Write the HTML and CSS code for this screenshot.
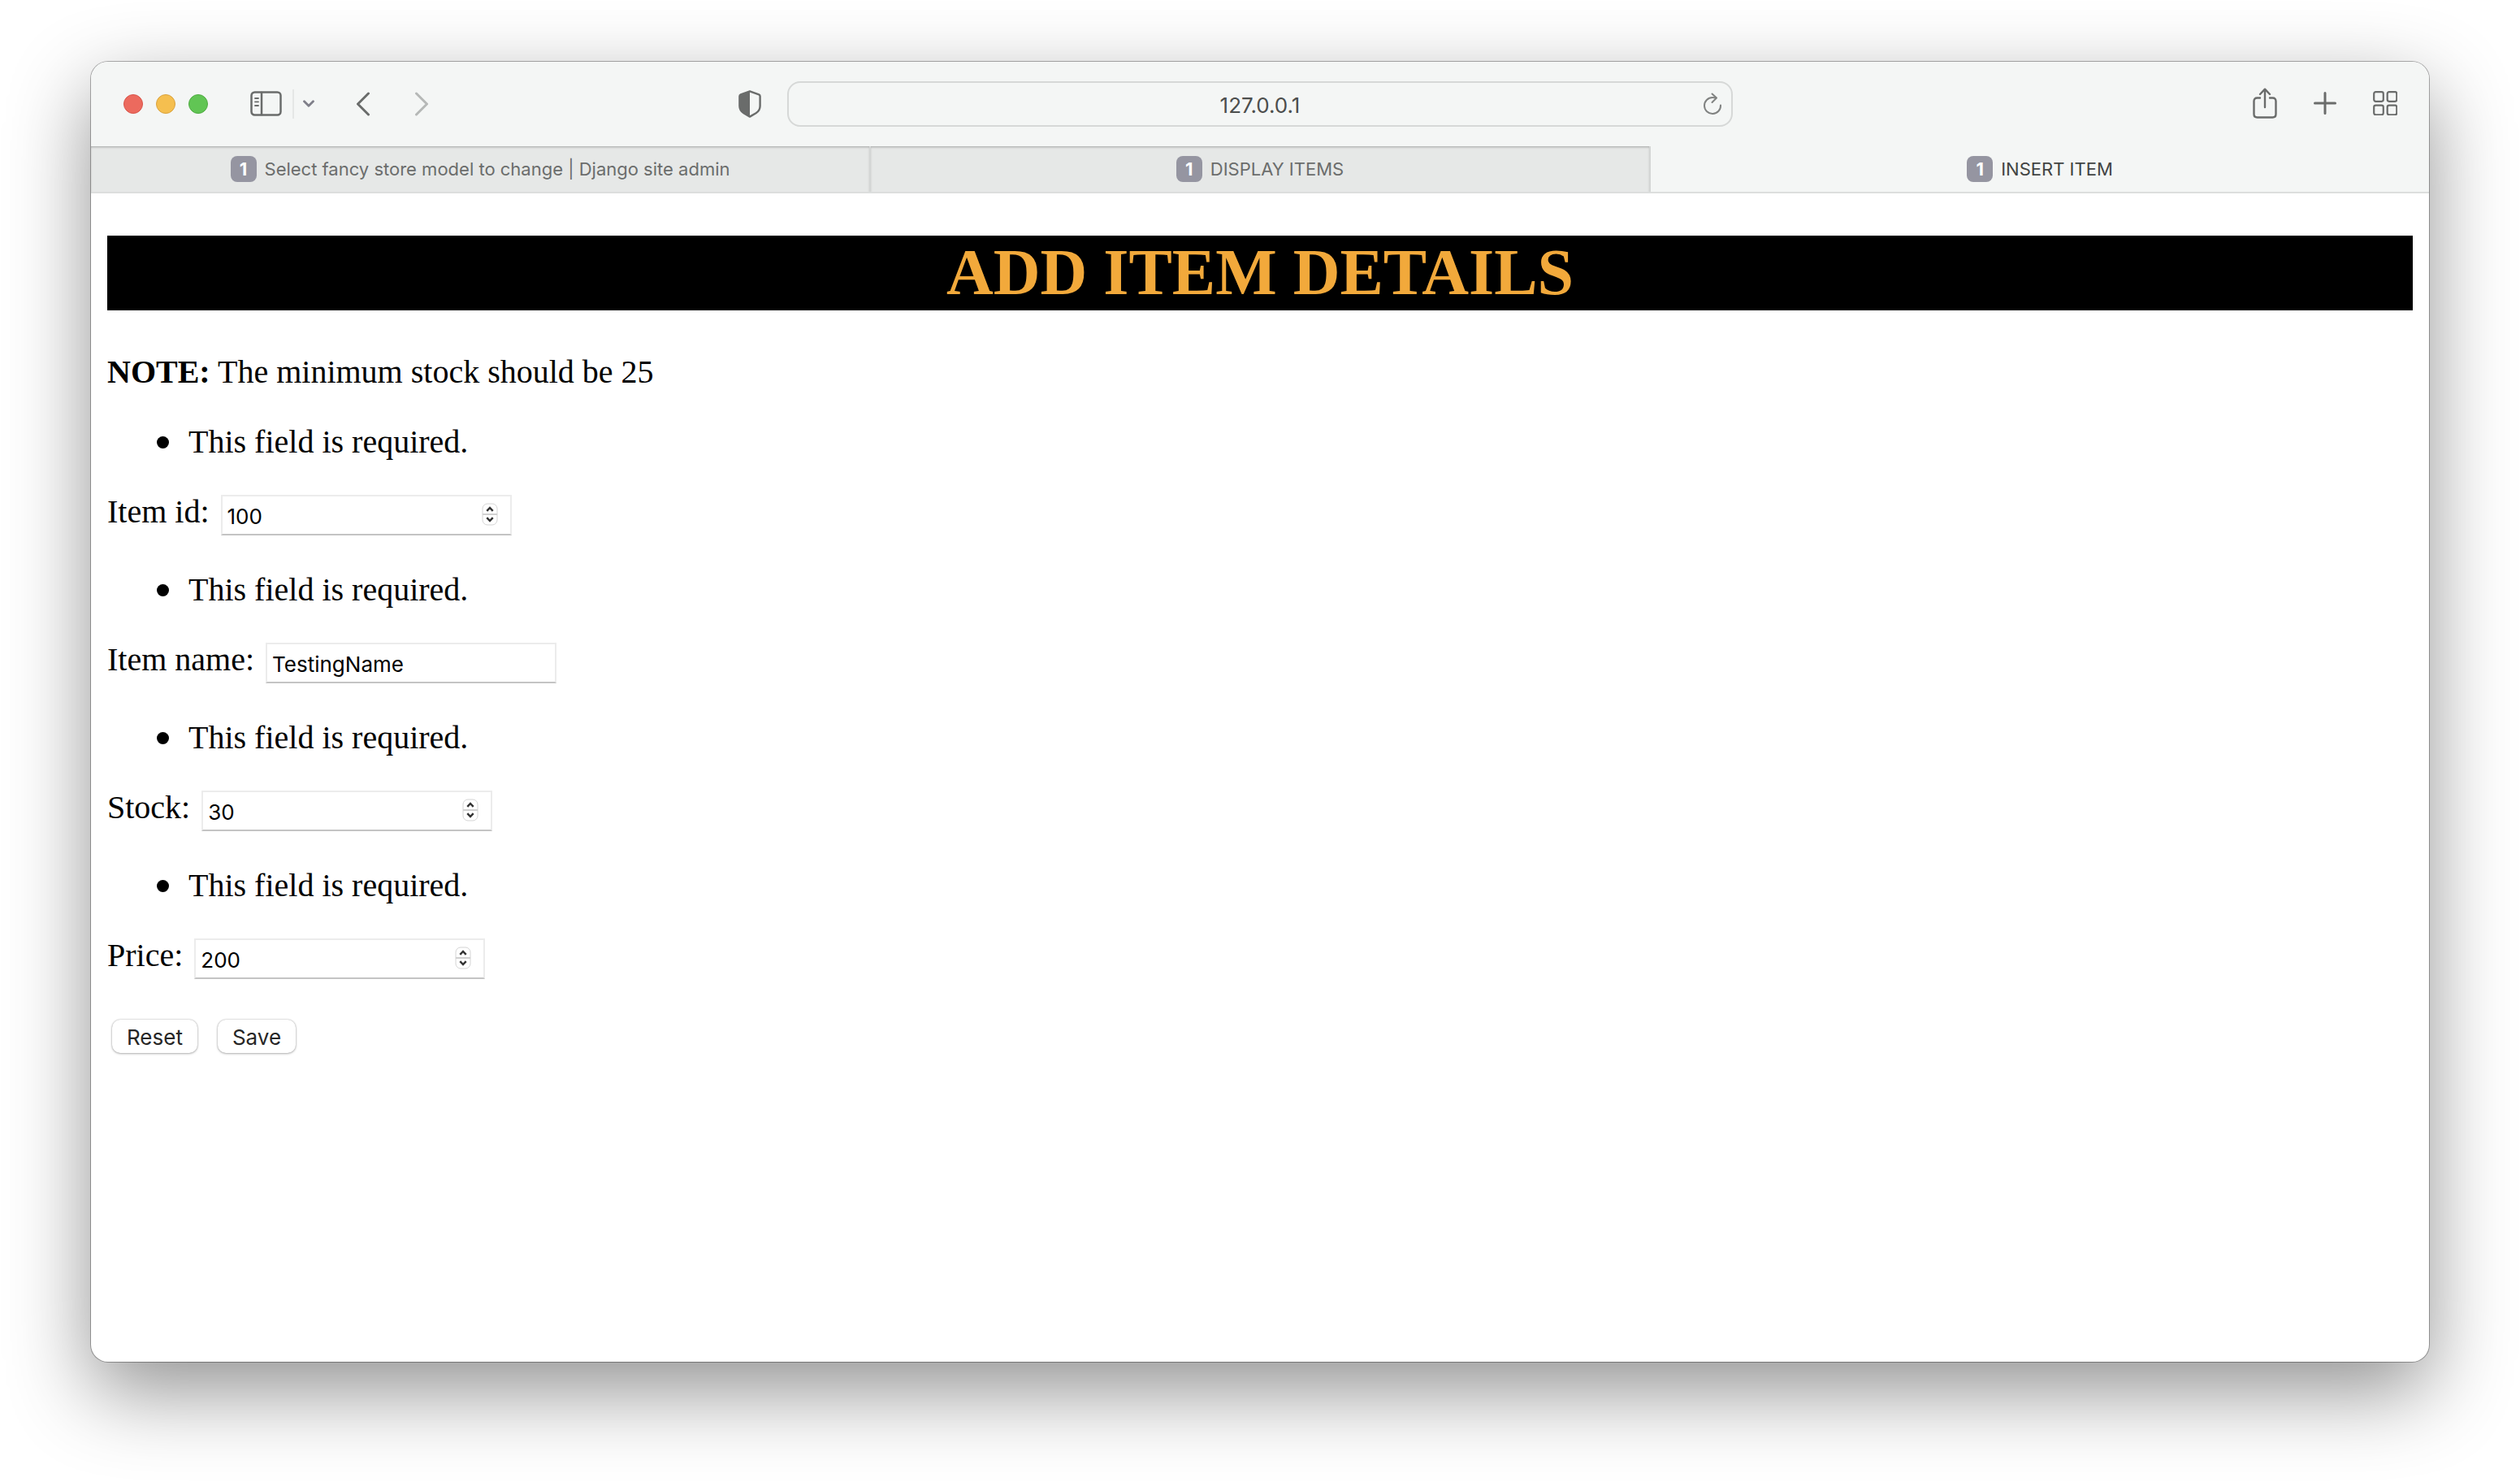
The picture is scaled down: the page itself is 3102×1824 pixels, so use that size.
FILE: index.html
```html
<!DOCTYPE html>
<html lang="en">
<head>
<meta charset="utf-8">
<title>INSERT ITEM</title>
<link rel="stylesheet" href="styles.css">
</head>
<body>
<div class="window">
  <header class="toolbar">
    <div class="tools tools-left">
      <div class="lights">
        <button class="light light-close" aria-label="Close"></button>
        <button class="light light-min" aria-label="Minimize"></button>
        <button class="light light-max" aria-label="Zoom"></button>
      </div>
      <button class="tool sidebar" aria-label="Sidebar">
        <svg width="40" height="32" viewBox="0 0 40 32" fill="none" stroke="currentColor" stroke-width="2.5" stroke-linecap="round"><rect x="1.5" y="1.5" width="36" height="28" rx="4"/><path d="M14 2v27"/><path d="M6 9h4M6 13.300h4M6 18h4" stroke-width="1.800"/></svg>
      </button>
      <span class="divider"></span>
      <button class="tool menu" aria-label="Sidebar menu">
        <svg width="14" height="10" viewBox="0 0 14 10" fill="none" stroke="#80808a" stroke-width="2.800" stroke-linecap="round" stroke-linejoin="round"><path d="M1.500 1.700 7 7.300l5.500-5.600"/></svg>
      </button>
      <button class="tool back" aria-label="Back">
        <svg width="18" height="30" viewBox="0 0 18 30" fill="none" stroke="currentColor" stroke-width="3" stroke-linecap="round" stroke-linejoin="round"><path d="M15.500 2 2.500 15l13 13"/></svg>
      </button>
      <button class="tool forward" aria-label="Forward" disabled>
        <svg width="18" height="30" viewBox="0 0 18 30" fill="none" stroke="currentColor" stroke-width="3" stroke-linecap="round" stroke-linejoin="round"><path d="M2.500 2l13 13-13 13"/></svg>
      </button>
      <button class="tool shield" aria-label="Privacy report">
        <svg width="28" height="34" viewBox="0 0 28 34"><path d="M14 1.300 25.200 5.300Q26.600 5.900 26.600 7.500V19.500Q26.600 25 21.500 28.300L14 32.600 6.500 28.300Q1.400 25 1.400 19.500V7.500Q1.400 5.900 2.800 5.300Z" fill="none" stroke="currentColor" stroke-width="2.400" stroke-linejoin="round"/><path d="M14 1.300V32.600L6.500 28.300Q1.400 25 1.400 19.500V7.500Q1.400 5.900 2.800 5.300Z" fill="currentColor"/></svg>
      </button>
    </div>
    <div class="address">
      <input class="url" type="text" value="127.0.0.1" aria-label="Address">
      <button class="tool reload" aria-label="Reload">
        <svg width="24" height="28" viewBox="0 0 24 28" fill="none" stroke="#808281" stroke-width="2" stroke-linecap="round" stroke-linejoin="round"><path d="M22 15.500A10 10 0 1 1 12 6q2.500 0 4.500.4"/><path d="M11.500 1.500 17 6.500l-5.500 5.500"/></svg>
      </button>
    </div>
    <div class="tools tools-right">
      <button class="tool" aria-label="Share">
        <svg width="30" height="38" viewBox="0 0 30 38" fill="none" stroke="currentColor" stroke-width="2.400" stroke-linecap="round" stroke-linejoin="round"><path d="M9 12.500H5.500Q1.500 12.500 1.500 16.500V32.500Q1.500 36.500 5.500 36.500H24.500Q28.500 36.500 28.500 32.500V16.500Q28.500 12.500 24.500 12.500H21"/><path d="M15 24V2M9 8l6-6.300L21 8"/></svg>
      </button>
      <button class="tool" aria-label="New tab">
        <svg width="28" height="28" viewBox="0 0 28 28" fill="none" stroke="currentColor" stroke-width="3" stroke-linecap="round"><path d="M14 1.500v25M1.500 14h25"/></svg>
      </button>
      <button class="tool" aria-label="Tab overview">
        <svg width="30" height="30" viewBox="0 0 30 30" fill="none" stroke="currentColor" stroke-width="2.200"><rect x="1.200" y="1.200" width="11.600" height="11.600" rx="2.200"/><rect x="17.700" y="1.200" width="11.600" height="11.600" rx="2.200"/><rect x="1.200" y="17.700" width="11.600" height="11.600" rx="2.200"/><rect x="17.700" y="17.700" width="11.600" height="11.600" rx="2.200"/></svg>
      </button>
    </div>
  </header>
  <nav class="tabs" aria-label="Tabs">
    <button class="tab"><span class="badge">1</span>Select fancy store model to change | Django site admin</button>
    <button class="tab"><span class="badge">1</span>DISPLAY ITEMS</button>
    <button class="tab tab-active"><span class="badge">1</span>INSERT ITEM</button>
  </nav>
  <main class="page">
    <h1 class="title">ADD ITEM DETAILS</h1>
    <form class="form">
      <p class="note"><b>NOTE:</b> The minimum stock should be 25</p>
      <ul class="errors"><li>This field is required.</li></ul>
      <div class="row">
        <label for="item-id">Item id:</label>
        <span class="field"><input class="input" id="item-id" type="number" value="100"><svg class="stepper" width="20" height="28" viewBox="0 0 20 28"><rect x="1" y="1" width="18" height="26" rx="6" fill="#fff" stroke="#d4d4d4"/><path d="M1 14h18" stroke="#d0d0d0" stroke-width="2"/><path d="M6.300 9.800 10 6l3.700 3.800M6.300 18.200 10 22l3.700-3.800" fill="none" stroke="#333" stroke-width="2.500"/></svg></span>
      </div>
      <ul class="errors"><li>This field is required.</li></ul>
      <div class="row">
        <label for="item-name">Item name:</label>
        <span class="field"><input class="input" id="item-name" type="text" value="TestingName"></span>
      </div>
      <ul class="errors"><li>This field is required.</li></ul>
      <div class="row">
        <label for="stock">Stock:</label>
        <span class="field"><input class="input" id="stock" type="number" value="30"><svg class="stepper" width="20" height="28" viewBox="0 0 20 28"><rect x="1" y="1" width="18" height="26" rx="6" fill="#fff" stroke="#d4d4d4"/><path d="M1 14h18" stroke="#d0d0d0" stroke-width="2"/><path d="M6.300 9.800 10 6l3.700 3.800M6.300 18.200 10 22l3.700-3.800" fill="none" stroke="#333" stroke-width="2.500"/></svg></span>
      </div>
      <ul class="errors"><li>This field is required.</li></ul>
      <div class="row">
        <label for="price">Price:</label>
        <span class="field"><input class="input" id="price" type="number" value="200"><svg class="stepper" width="20" height="28" viewBox="0 0 20 28"><rect x="1" y="1" width="18" height="26" rx="6" fill="#fff" stroke="#d4d4d4"/><path d="M1 14h18" stroke="#d0d0d0" stroke-width="2"/><path d="M6.300 9.800 10 6l3.700 3.800M6.300 18.200 10 22l3.700-3.800" fill="none" stroke="#333" stroke-width="2.500"/></svg></span>
      </div>
      <div class="actions">
        <button class="btn" type="reset">Reset</button>
        <button class="btn" type="submit">Save</button>
      </div>
    </form>
  </main>
</div>
</body>
</html>
```
FILE: styles.css
```css
* { box-sizing: border-box; }

body {
  display: flex;
  min-height: 100vh;
  margin: 0;
  padding: 76px 112px 148px;
  background: #fff;
  font-family: "Liberation Serif", "Times New Roman", serif;
}

button, input {
  margin: 0;
  padding: 0;
  border: 0;
  background: none;
  font-family: Inter, "Liberation Sans", sans-serif;
}

svg { display: block; }

.window {
  flex: 1;
  min-width: 0;
  display: flex;
  flex-direction: column;
  overflow: hidden;
  border-radius: 21px;
  background: #fff;
  box-shadow: 0 0 0 1px rgba(0, 0, 0, .3), 0 36px 100px rgba(0, 0, 0, .43);
}

/* Toolbar */
.toolbar {
  display: grid;
  grid-template-columns: 1fr minmax(auto, 1164px) 1fr;
  align-items: center;
  height: 104px;
  background: #f4f6f5;
  color: #6a6c6b;
}

.tools { display: flex; align-items: center; }
.tools-left { padding: 0 32px 0 40px; }
.tools-right { justify-content: flex-end; gap: 45px; padding: 0 39px 3px 0; }
.tool { flex: none; color: inherit; }

.lights { display: flex; gap: 16px; }
.light { width: 24px; height: 24px; border: 1px solid; border-radius: 50%; }
.light-close { background: #ec6a5e; border-color: #d8544a; }
.light-min { background: #f5bf4f; border-color: #d9a23d; }
.light-max { background: #61c554; border-color: #4fab42; }

.sidebar { margin-left: 52px; }
.divider { width: 2px; height: 36px; margin: 0 11px 0 12px; background: #e5e7e6; }
.back { margin-left: 51px; }
.forward { margin-left: 54px; color: #b6b8b7; }
.shield { margin-left: auto; }

.address {
  display: flex;
  align-items: center;
  height: 56px;
  padding: 0 11px 0 35px;
  border: 2px solid #d6d8d7;
  border-radius: 16px;
}
.url {
  flex: 1;
  min-width: 0;
  padding-top: 3px;
  color: #4c4e4d;
  font-size: 26px;
  text-align: center;
}

/* Tabs */
.tabs {
  display: grid;
  grid-template-columns: 480fr 480fr 479fr;
  height: 58px;
  border-bottom: 2px solid #dcdedd;
}
.tab {
  display: flex;
  align-items: center;
  justify-content: center;
  gap: 10px;
  border-right: 2px solid #d4d6d5;
  background: #e6e8e7;
  box-shadow: inset 0 2px 3px -1px rgba(0, 0, 0, .3);
  color: #6b6d6c;
  font-size: 22px;
}
.tab-active {
  border-right: 0;
  background: #f4f6f5;
  box-shadow: none;
  color: #424443;
}
.badge {
  width: 32px;
  border-radius: 8px;
  background: #9595a1;
  color: #fff;
  font-weight: 700;
  line-height: 32px;
  text-align: center;
}

/* Page */
.page {
  padding: 52px 20px 20px;
  color: #000;
  font-size: 40px;
  line-height: 46px;
}
.title {
  margin: 0 0 53px;
  padding-bottom: 2px;
  background: #000;
  color: #f2a93b;
  font-size: 80px;
  line-height: 90px;
  text-align: center;
}
.form { display: flex; flex-direction: column; gap: 40px; }
.note { margin: 0; }

.errors { margin: 0; padding-left: 61px; list-style: none; }
.errors li { display: flex; align-items: center; gap: 24px; }
.errors li::before {
  content: "";
  width: 15px;
  height: 15px;
  border-radius: 50%;
  background: #000;
}

.row { display: flex; gap: 14px; height: 56px; }
.field { position: relative; margin-top: 2px; }
.input {
  display: block;
  width: 358px;
  height: 50px;
  padding: 2px 6px 0;
  border: 2px solid #ececec;
  border-bottom-color: #c4c4c4;
  background: #fff;
  color: #000;
  font-size: 26px;
}
.input[type="number"] { appearance: textfield; }
.input::-webkit-inner-spin-button { appearance: none; margin: 0; }
.stepper { position: absolute; top: 10px; right: 17px; }

.actions { display: flex; gap: 25px; padding: 6px; }
.btn {
  height: 41px;
  padding: 1px 18px 0;
  border-radius: 10px;
  background: #fff;
  box-shadow: 0 0 2px rgba(0, 0, 0, .3), 0 1px 3px rgba(0, 0, 0, .25);
  color: #262626;
  font-size: 26px;
}
```
